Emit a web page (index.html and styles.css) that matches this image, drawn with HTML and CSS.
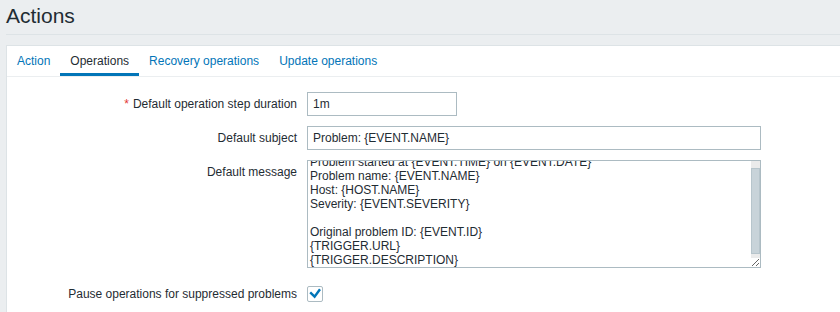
FILE: index.html
```html
<!DOCTYPE html>
<html lang="en">
<head>
<meta charset="utf-8">
<title>Actions</title>
<link rel="stylesheet" href="styles.css">
</head>
<body>
<header class="header">
  <h1 class="title">Actions</h1>
</header>
<main class="container">
  <ul class="tabs">
    <li class="tab"><a href="#">Action</a></li>
    <li class="tab active"><a href="#">Operations</a></li>
    <li class="tab"><a href="#">Recovery operations</a></li>
    <li class="tab"><a href="#">Update operations</a></li>
  </ul>
  <form class="form">
    <label class="label"><span class="asterisk">*</span>Default operation step duration</label>
    <div class="field"><input class="input input-short" type="text" value="1m"></div>

    <label class="label">Default subject</label>
    <div class="field"><input class="input input-wide" type="text" value="Problem: {EVENT.NAME}"></div>

    <label class="label">Default message</label>
    <div class="field">
      <div class="msg-wrap">
        <textarea class="msg" id="msg">Problem started at {EVENT.TIME} on {EVENT.DATE}
Problem name: {EVENT.NAME}
Host: {HOST.NAME}
Severity: {EVENT.SEVERITY}

Original problem ID: {EVENT.ID}
{TRIGGER.URL}
{TRIGGER.DESCRIPTION}</textarea>
        <div class="scrollbar" aria-hidden="true">
          <span class="sb-btn sb-top"></span>
          <span class="sb-thumb"></span>
          <span class="sb-btn sb-bottom"></span>
        </div>
      </div>
    </div>

    <label class="label label-cb">Pause operations for suppressed problems</label>
    <div class="field field-cb">
      <span class="checkbox"><svg width="14" height="14" viewBox="0 0 14 14"><path d="M2.2 5.3 L6.6 9.6 L12 2.2" fill="none" stroke="#0275b8" stroke-width="2.4" stroke-linejoin="miter"/></svg></span>
    </div>
  </form>
</main>
<script src="script.js"></script>
</body>
</html>
```
FILE: styles.css
```css
html, body {
  margin: 0;
  padding: 0;
}
body {
  background: #ebeef0;
  font-family: "Liberation Sans", Arial, sans-serif;
  font-size: 12px;
  color: #1f2c33;
  overflow: hidden;
  height: 100vh;
  display: flex;
  flex-direction: column;
}
.header {
  margin-left: 6px;
  height: 34px;
  flex: none;
  border-bottom: 1px solid #dde3e6;
}
.title {
  margin: 0;
  padding-top: 4px;
  font-size: 21px;
  line-height: 24px;
  font-weight: normal;
  color: #1f2c33;
}
.container {
  flex: 1;
  margin: 10px 0 0 6px;
  background: #fff;
  border-top: 1px solid #dde3e6;
  border-left: 1px solid #dde3e6;
  min-height: 0;
}
.tabs {
  list-style: none;
  margin: 0;
  padding: 0;
  display: flex;
  border-bottom: 1px solid #ebeef0;
}
.tab a {
  display: block;
  padding: 0 10px;
  line-height: 30px;
  color: #0275b8;
  text-decoration: none;
}
.tab.active a {
  color: #1f2c33;
  box-shadow: inset 0 -3px 0 #0275b8;
}
.form {
  display: grid;
  grid-template-columns: 290px 1fr;
  column-gap: 10px;
  row-gap: 10px;
  padding-top: 15px;
}
.label {
  text-align: right;
  line-height: 24px;
  white-space: nowrap;
}
.asterisk {
  color: #e33734;
  margin-right: 4px;
}
.field {
  display: flex;
}
.input {
  box-sizing: border-box;
  height: 24px;
  margin: 0;
  padding: 0 5px;
  border: 1px solid #acbbc2;
  border-radius: 0;
  background: #fff;
  font-family: "Liberation Sans", Arial, sans-serif;
  font-size: 12px;
  color: #1f2c33;
  outline: none;
}
.input-short { width: 150px; }
.input-wide { width: 454px; }
.msg-wrap {
  position: relative;
  width: 454px;
  height: 108px;
}
.msg {
  box-sizing: border-box;
  width: 454px;
  height: 108px;
  margin: 0;
  padding: 0 12px 0 2px;
  border: 1px solid #acbbc2;
  border-radius: 0;
  font-family: "Liberation Sans", Arial, sans-serif;
  font-size: 12px;
  line-height: 14px;
  color: #1f2c33;
  resize: vertical;
  outline: none;
  overflow: hidden;
  display: block;
}
.scrollbar {
  position: absolute;
  top: 1px;
  right: 1px;
  width: 9px;
  bottom: 10px;
  display: flex;
  flex-direction: column;
  background: #ebebeb;
}
.sb-btn {
  display: block;
  background: #ebebeb;
}
.sb-top { height: 7px; }
.sb-bottom { height: 4px; }
.sb-thumb {
  display: block;
  flex: 1;
  box-sizing: border-box;
  background: #c8d3d9;
  border: 1px solid #b7c5cc;
}
.label-cb,
.field-cb {
  margin-top: 4px;
}
.field-cb {
  align-items: center;
  height: 24px;
}
.checkbox {
  box-sizing: border-box;
  width: 16px;
  height: 16px;
  border: 1px solid #acbbc2;
  border-radius: 2px;
  background: #fff;
  display: flex;
  align-items: center;
  justify-content: center;
}
.checkbox svg {
  display: block;
}
```
FILE: script.js
```js
var m = document.getElementById('msg');
m.scrollTop = m.scrollHeight;
```
